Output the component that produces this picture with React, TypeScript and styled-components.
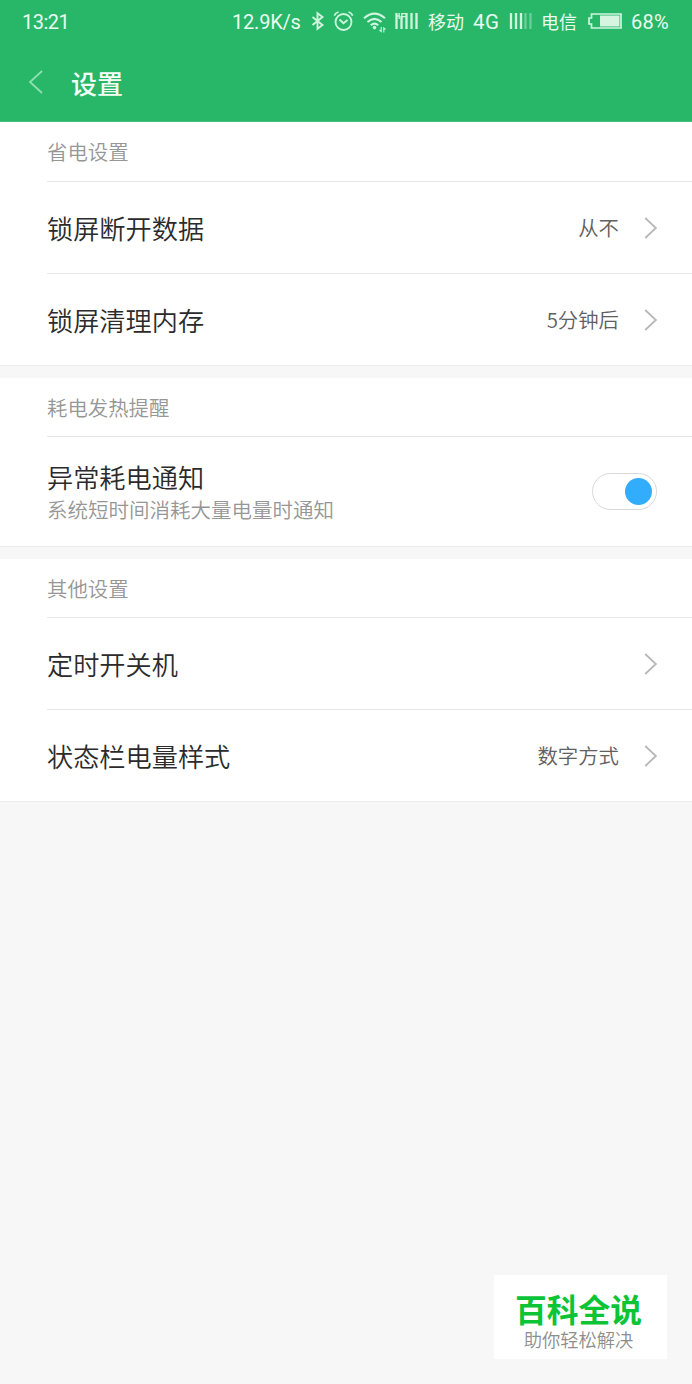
import React from 'react';
import styled, { createGlobalStyle } from 'styled-components';

const Global = createGlobalStyle`
  * { box-sizing: border-box; }
  body {
    margin: 0;
    background: #f7f7f7;
    font-family: "Noto Sans CJK SC", "Noto Sans", sans-serif;
  }
`;

const Screen = styled.div`
  display: flex;
  flex-direction: column;
  width: 692px;
  height: 1384px;
  background: #f7f7f7;
  overflow: hidden;
`;

const TopArea = styled.header`
  flex: none;
  height: 122px;
  background: #28b768;
  border-bottom: 1px solid #45c07c;
  color: #e9fbf0;
`;

const StatusBar = styled.div`
  display: flex;
  align-items: center;
  height: 43px;
  padding-left: 22px;
`;

const StatusText = styled.span<{ $w: number; $ml?: number; $size?: number; $track?: number; $cjk?: boolean }>`
  flex: none;
  width: ${p => p.$w}px;
  margin-left: ${p => p.$ml ?? 0}px;
  margin-bottom: ${p => (p.$cjk ? 2 : 0)}px;
  font-family: ${p => (p.$cjk ? '"Noto Sans CJK SC"' : 'Roboto')}, sans-serif;
  font-size: ${p => p.$size ?? 20}px;
  font-weight: 400;
  letter-spacing: ${p => p.$track ?? 0}px;
  line-height: 24px;
  white-space: nowrap;
`;

const StatusIcon = styled.svg<{ $ml: number }>`
  flex: none;
  display: block;
  margin-left: ${p => p.$ml}px;
  margin-bottom: 2px;
  fill: none;
  stroke: #d0f5de;
`;

const TitleBar = styled.div`
  display: flex;
  align-items: center;
  height: 78px;
  padding-left: 28px;
`;

const BackIcon = styled.svg`
  display: block;
  fill: none;
  stroke: #8ee0b0;
  stroke-width: 1.8;
`;

const Title = styled.h1`
  margin: 1px 0 0 27px;
  font-size: 26px;
  font-weight: 500;
  line-height: 37px;
  color: #f4fff8;
`;

const Section = styled.section`
  flex: none;
  margin-bottom: 12px;
  padding-left: 47px;
  background: #fff;
  border-bottom: 1px solid #ececec;
`;

const SectionHead = styled.h2<{ $h?: number }>`
  height: ${p => p.$h ?? 58}px;
  margin: 0;
  font-size: 20.4px;
  font-weight: 350;
  line-height: ${p => (p.$h ? 58 : 59)}px;
  color: #969696;
`;

const Row = styled.div<{ $h?: number }>`
  display: flex;
  align-items: center;
  height: ${p => p.$h ?? 92}px;
  padding-right: 34px;
  border-top: 1px solid #e6e6e6;
`;

const Labels = styled.div`
  flex: 1;
`;

const Label = styled.div`
  font-size: 26.2px;
  font-weight: 350;
  line-height: 36px;
  color: #2b2b2b;
`;

const Hint = styled.div`
  margin-top: -1px;
  font-size: 20.5px;
  font-weight: 350;
  line-height: 30px;
  color: #969696;
`;

const Value = styled.span`
  margin: 0 25px 1px 0;
  font-size: 20.4px;
  font-weight: 350;
  line-height: 30px;
  color: #606060;
`;

const Chevron = styled.svg`
  display: block;
  fill: none;
  stroke: #b8b8b8;
  stroke-width: 1.8;
`;

const Toggle = styled.div`
  display: flex;
  align-items: center;
  justify-content: flex-end;
  width: 65px;
  height: 37px;
  margin-right: 1px;
  padding-right: 4px;
  border: 1px solid #d9d9d9;
  border-radius: 19px;
  background: #fff;
`;

const Knob = styled.span`
  width: 27px;
  height: 27px;
  border-radius: 50%;
  background: #31adfb;
`;

const Stamp = styled.aside`
  position: absolute;
  left: 494px;
  top: 1275px;
  width: 173px;
  height: 84px;
  padding-top: 13px;
  background: #fff;
  text-align: center;
`;

const StampName = styled.div`
  width: 169px;
  font-size: 31.8px;
  font-weight: 700;
  line-height: 40px;
  color: #0cc436;
`;

const StampText = styled.div`
  width: 169px;
  font-size: 18.3px;
  font-weight: 350;
  line-height: 22px;
  color: #8e8e8e;
`;

const Arrow = () => (
  <Chevron width="14" height="24" viewBox="0 0 14 24">
    <path d="M1.2 2L11.9 12L1.2 22" />
  </Chevron>
);

const Item = ({ label, value }: { label: string; value?: string }) => (
  <Row>
    <Labels><Label>{label}</Label></Labels>
    {value && <Value>{value}</Value>}
    <Arrow />
  </Row>
);

export default function App() {
  return (
    <Screen>
      <Global />
      <TopArea>
        <StatusBar>
          <StatusText $w={48} $track={-0.5}>13:21</StatusText>
          <StatusText $w={70} $ml={162} $track={-0.2}>12.9K/s</StatusText>
          <StatusIcon $ml={9} width="14" height="20" viewBox="0 0 14 20" strokeWidth="1.9">
            <path d="M1.5 6L11.5 14L6.5 17.8V2.2L11.5 6L1.5 14" />
          </StatusIcon>
          <StatusIcon $ml={8} width="22" height="22" viewBox="0 0 22 22" strokeWidth="1.8">
            <circle cx="10.5" cy="12" r="8" />
            <path d="M6.5 9.5L10.5 13.2L14.5 10M1.3 5.6Q2.5 2.8 5.5 2M19.7 5.6Q18.5 2.8 15.5 2" />
          </StatusIcon>
          <StatusIcon $ml={8} width="25" height="24" viewBox="0 0 25 24" strokeWidth="2.2">
            <path d="M1 9.3Q11.5 -0.2 22 9.3M4.5 13Q11.5 6.6 18.5 13M7.8 16.3Q11.5 13 15.2 16.3" />
            <circle cx="11.5" cy="18.6" r="1.8" fill="#d0f5de" stroke="none" />
            <path d="M18.2 18V22.5L16.5 21M20.8 23.5V19L22.5 20.5" strokeWidth="1.1" />
          </StatusIcon>
          <StatusIcon $ml={7} width="24" height="20" viewBox="0 0 24 20" strokeWidth="2.3">
            <path d="M1.5 2V18M6.5 5V18M11.5 2V18M16.5 2V18M21.5 2V18" />
            <path d="M4.2 2V8M1.5 5H4.2M6.8 8V2.6H11M7 5.6H11" strokeWidth="1.3" />
          </StatusIcon>
          <StatusText $w={36} $ml={9} $size={18} $cjk>移动</StatusText>
          <StatusText $w={29} $ml={9} $size={20.5} $track={0.4}>4G</StatusText>
          <StatusIcon $ml={7} width="24" height="20" viewBox="0 0 24 20" strokeWidth="2.3">
            <path d="M2 2V18M7 2V18M12 2V18" />
            <path d="M16.5 2V18M21.5 2V18" opacity="0.4" />
          </StatusIcon>
          <StatusText $w={36} $ml={8} $size={18} $cjk>电信</StatusText>
          <StatusIcon $ml={10} width="35" height="16" viewBox="0 0 35 16" strokeWidth="1.7">
            <path d="M4.5 1H34V15H4.5V11H2V5H4.5Z" />
            <path d="M13 2.5H32.5V13.5H13Z" fill="#d5f5e1" stroke="none" />
          </StatusIcon>
          <StatusText $w={42} $ml={9} $track={0.2}>68%</StatusText>
        </StatusBar>
        <TitleBar>
          <BackIcon width="16" height="26" viewBox="0 0 16 26">
            <path d="M14 2L2 13L14 24" />
          </BackIcon>
          <Title>设置</Title>
        </TitleBar>
      </TopArea>

      <Section>
        <SectionHead $h={59}>省电设置</SectionHead>
        <Item label="锁屏断开数据" value="从不" />
        <Item label="锁屏清理内存" value="5分钟后" />
      </Section>

      <Section>
        <SectionHead>耗电发热提醒</SectionHead>
        <Row $h={110}>
          <Labels>
            <Label>异常耗电通知</Label>
            <Hint>系统短时间消耗大量电量时通知</Hint>
          </Labels>
          <Toggle role="switch" aria-checked="true"><Knob /></Toggle>
        </Row>
      </Section>

      <Section>
        <SectionHead>其他设置</SectionHead>
        <Item label="定时开关机" />
        <Item label="状态栏电量样式" value="数字方式" />
      </Section>

      <Stamp>
        <StampName>百科全说</StampName>
        <StampText>助你轻松解决</StampText>
      </Stamp>
    </Screen>
  );
}
